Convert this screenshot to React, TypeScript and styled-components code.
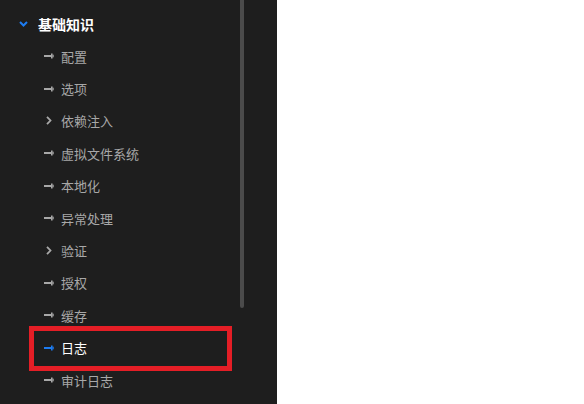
import styled, { createGlobalStyle } from 'styled-components';

type NavItem = {
  label: string;
  kind: 'leaf' | 'group';
  active?: boolean;
};

const items: NavItem[] = [
  { label: '配置', kind: 'leaf' },
  { label: '选项', kind: 'leaf' },
  { label: '依赖注入', kind: 'group' },
  { label: '虚拟文件系统', kind: 'leaf' },
  { label: '本地化', kind: 'leaf' },
  { label: '异常处理', kind: 'leaf' },
  { label: '验证', kind: 'group' },
  { label: '授权', kind: 'leaf' },
  { label: '缓存', kind: 'leaf' },
  { label: '日志', kind: 'leaf', active: true },
  { label: '审计日志', kind: 'leaf' },
];

const GlobalStyle = createGlobalStyle`
  html, body {
    margin: 0;
    padding: 0;
    background: #ffffff;
  }
  body {
    font-family: "Noto Sans CJK SC", "Noto Sans", sans-serif;
  }
`;

const ChevronDown = () => (
  <svg width="9" height="6" viewBox="0 0 9 6">
    <path d="M1 1 L4.5 4.5 L8 1" fill="none" stroke="#1d7cf2" strokeWidth="2" />
  </svg>
);

const ChevronRight = () => (
  <svg width="6" height="9" viewBox="0 0 6 9">
    <path d="M1 0.8 L4.5 4.5 L1 8.2" fill="none" stroke="#a8a8a8" strokeWidth="1.8" />
  </svg>
);

const ArrowRight = ({ color }: { color: string }) => (
  <svg width="10" height="6" viewBox="0 0 10 6">
    <rect x="0" y="2" width="8" height="2" fill={color} />
    <rect x="7" y="0.5" width="1.6" height="5" fill={color} />
    <rect x="8.5" y="1.7" width="1.2" height="2.6" fill={color} />
  </svg>
);

export default function App() {
  return (
    <>
      <GlobalStyle />
      <Page>
        <Sidebar>
          <Header>
            <HeaderIcon>
              <ChevronDown />
            </HeaderIcon>
            <HeaderLabel>基础知识</HeaderLabel>
          </Header>
          <List>
            {items.map((item) => (
              <Row key={item.label} $active={item.active}>
                <ItemIcon>
                  {item.kind === 'group' ? (
                    <ChevronRight />
                  ) : (
                    <ArrowRight color={item.active ? '#1d7cf2' : '#a8a8a8'} />
                  )}
                </ItemIcon>
                <Label $active={item.active}>{item.label}</Label>
                {item.active && <Marker />}
              </Row>
            ))}
          </List>
          <Thumb />
        </Sidebar>
      </Page>
    </>
  );
}

const Page = styled.div`
  display: flex;
  width: 584px;
  height: 404px;
  overflow: hidden;
`;

const Sidebar = styled.nav`
  position: relative;
  width: 277px;
  height: 404px;
  background: #1e1e1e;
  overflow: hidden;
`;

const Header = styled.div`
  display: flex;
  align-items: center;
  height: 32px;
  margin-top: 8px;
  padding-left: 19px;
`;

const HeaderIcon = styled.span`
  display: flex;
  align-items: center;
  width: 19px;
`;

const HeaderLabel = styled.span`
  color: #ffffff;
  font-size: 14px;
  font-weight: 700;
`;

const List = styled.ul`
  list-style: none;
  margin: 0;
  padding: 0;
`;

const Row = styled.li<{ $active?: boolean }>`
  position: relative;
  display: flex;
  align-items: center;
  height: 32.4px;
  padding-left: 43px;
`;

const ItemIcon = styled.span`
  display: flex;
  align-items: center;
  justify-content: center;
  width: 12px;
  margin-right: 6px;
`;

const Label = styled.span<{ $active?: boolean }>`
  color: ${(p) => (p.$active ? '#ffffff' : '#a8a8a8')};
  font-size: 13px;
`;

const Marker = styled.span`
  position: absolute;
  left: 29px;
  top: -6px;
  width: 193px;
  height: 35px;
  border: 5px solid #e41e26;
  pointer-events: none;
`;

const Thumb = styled.div`
  position: absolute;
  top: 0;
  left: 240px;
  width: 4px;
  height: 308px;
  background: #4b4b4b;
  border-radius: 0 0 2px 2px;
`;
